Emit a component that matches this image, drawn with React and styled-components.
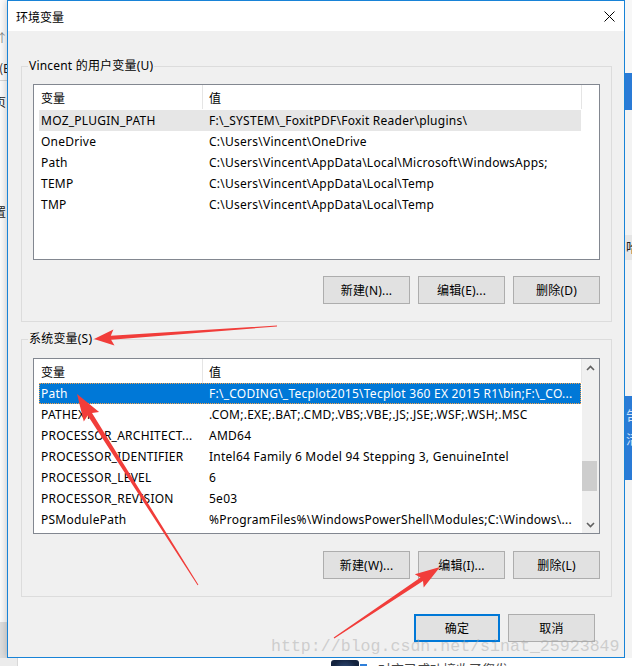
import React from "react";
import styled, { createGlobalStyle } from "styled-components";

const UI_FONT = `"Noto Sans", "Noto Sans CJK SC", sans-serif`;

const GlobalStyle = createGlobalStyle`
  html, body { margin: 0; padding: 0; }
  body {
    width: 632px;
    height: 666px;
    overflow: hidden;
    background: #f4f4f4;
    font-family: ${UI_FONT};
  }
  * { box-sizing: border-box; }
`;

const Page = styled.div`
  position: relative;
  width: 632px;
  height: 666px;
  overflow: hidden;
  display: grid;
  grid-template-columns: 7px 618px 7px;
  grid-template-rows: 658px 8px;
`;

/* ---------- background windows ---------- */
const LeftStrip = styled.div`
  background: #fbfbfb;
  overflow: hidden;
  display: flex;
  flex-direction: column;
  border-bottom: 36px solid #dedede;
`;

const StripGlyph = styled.div`
  margin-top: ${(p) => p.$mt}px;
  margin-left: ${(p) => p.$ml || -4}px;
  font-size: 12px;
  line-height: 12px;
  height: 12px;
  white-space: nowrap;
  color: ${(p) => p.$color || "#222"};
  font-family: "Noto Sans CJK SC", sans-serif;
`;

const StripRule = styled.div`
  margin-top: ${(p) => p.$mt}px;
  height: 1px;
  background: #d6d6d6;
`;

const RightStrip = styled.div`
  background: #f3f3f3;
  overflow: hidden;
  display: flex;
  flex-direction: column;
`;

const Band = styled.div`
  height: ${(p) => p.$h}px;
  flex: none;
  background: ${(p) => p.$bg};
  overflow: hidden;
  display: flex;
  flex-direction: column;
  gap: 10px;
  padding-top: ${(p) => p.$pt || 0}px;
`;

const BandGlyph = styled.div`
  margin-left: 1px;
  font-size: 13px;
  line-height: 14px;
  color: ${(p) => p.$color};
  font-family: "Noto Sans CJK SC", sans-serif;
  white-space: nowrap;
`;

const BottomStrip = styled.div`
  grid-column: 1 / 4;
  background: #ffffff;
  display: flex;
  overflow: hidden;
`;

const BottomGray = styled.div`
  width: 18px;
  flex: none;
  background: #ececec;
  border-right: 1px solid #d8d8d8;
`;

const Avatar = styled.div`
  margin-left: 313px;
  margin-top: 2px;
  width: 28px;
  height: 20px;
  flex: none;
  border-radius: 3px;
  background: radial-gradient(circle at 50% 60%, #3a5a8c 0, #14233f 70%);
  position: relative;
`;

const AvatarBadge = styled.div`
  position: absolute;
  right: -9px;
  top: 3px;
  width: 9px;
  height: 9px;
  background: #2f7fd9;
  border: 1px solid #fff;
`;

const BottomText = styled.div`
  margin-left: 19px;
  padding-top: 3px;
  font-size: 13px;
  line-height: 16px;
  color: #444;
  white-space: nowrap;
  font-family: "Noto Sans CJK SC", sans-serif;
`;

/* ---------- dialog ---------- */
const Dialog = styled.div`
  width: 618px;
  height: 658px;
  border: 1px solid #1883d7;
  background: #f0f0f0;
  display: flex;
  flex-direction: column;
  box-shadow: 0 0 8px rgba(0, 0, 0, 0.25);
`;

const TitleBar = styled.div`
  height: 30px;
  flex: none;
  background: #ffffff;
  display: flex;
  align-items: center;
  justify-content: space-between;
  padding-left: 8px;
`;

const Title = styled.div`
  font-size: 12px;
  color: #000;
  font-family: "Noto Sans CJK SC", sans-serif;
`;

const CloseButton = styled.div`
  width: 29px;
  height: 30px;
  display: flex;
  align-items: center;
  justify-content: center;
`;

const Body = styled.div`
  flex: 1;
  display: flex;
  flex-direction: column;
  padding: 0 12px 0 13px;
`;

const Group = styled.div`
  position: relative;
  margin-top: ${(p) => p.$mt}px;
  border: 1px solid #dcdcdc;
  padding: ${(p) => p.$pt}px 11px ${(p) => p.$pb}px 11px;
  display: flex;
  flex-direction: column;
`;

const Legend = styled.div`
  position: absolute;
  left: 6px;
  top: -9px;
  padding: 0 1px;
  background: #f0f0f0;
  font-size: 12px;
  line-height: 16px;
  letter-spacing: 0.2px;
  color: #000;
`;

const List = styled.div`
  height: 176px;
  border: 1px solid #828790;
  background: #ffffff;
  display: flex;
  overflow: hidden;
`;

const ListMain = styled.div`
  width: 548px;
  flex: none;
  display: flex;
  flex-direction: column;
`;

const Header = styled.div`
  height: 24px;
  flex: none;
  display: flex;
`;

const HeaderCell = styled.div`
  width: ${(p) => (p.$w ? `${p.$w}px` : "auto")};
  flex: ${(p) => (p.$w ? "none" : 1)};
  padding-left: ${(p) => p.$pl}px;
  border-right: 1px solid #e5e5e5;
  display: flex;
  align-items: center;
  font-size: 12px;
  color: #000;
  font-family: "Noto Sans CJK SC", sans-serif;
`;

const Rows = styled.div`
  padding-top: ${(p) => p.$pt}px;
  display: flex;
  flex-direction: column;
`;

const Row = styled.div`
  height: 21px;
  margin-left: 5px;
  width: 542px;
  display: grid;
  grid-template-columns: 163px 1fr;
  align-items: center;
  font-size: 12px;
  letter-spacing: 0.25px;
  white-space: nowrap;
  color: ${(p) => (p.$sel === "active" ? "#ffffff" : "#000000")};
  background: ${(p) =>
    p.$sel === "active" ? "#0078d7" : p.$sel === "inactive" ? "#e6e6e6" : "transparent"};
  outline: ${(p) => (p.$sel === "active" ? "1px dotted #f7a24a" : "none")};
  outline-offset: -1px;
`;

const Cell = styled.div`
  padding-left: ${(p) => p.$pl}px;
  overflow: hidden;
`;

const SideBlank = styled.div`
  flex: 1;
  background: #ffffff;
`;

const ScrollBar = styled.div`
  width: 17px;
  flex: none;
  margin-left: auto;
  background: #f0f0f0;
  display: flex;
  flex-direction: column;
`;

const ScrollArrow = styled.div`
  height: 17px;
  flex: none;
  display: flex;
  align-items: center;
  justify-content: center;
`;

const ScrollTrack = styled.div`
  flex: 1;
  display: flex;
  flex-direction: column;
  padding-top: ${(p) => p.$offset}px;
`;

const Thumb = styled.div`
  width: 15px;
  height: 30px;
  background: #cdcdcd;
`;

const ButtonRow = styled.div`
  margin-top: ${(p) => p.$mt}px;
  margin-right: ${(p) => p.$mr || 0}px;
  display: flex;
  justify-content: flex-end;
  gap: ${(p) => p.$gap}px;
`;

const Button = styled.div`
  width: ${(p) => p.$w}px;
  height: 28px;
  background: #e1e1e1;
  border: ${(p) => (p.$default ? "2px solid #0078d7" : "1px solid #adadad")};
  display: flex;
  align-items: center;
  justify-content: center;
  font-size: 12px;
  letter-spacing: 0.2px;
  color: #000;
  white-space: nowrap;
`;

/* ---------- overlays ---------- */
const Overlay = styled.svg`
  position: absolute;
  left: 0;
  top: 0;
  width: 632px;
  height: 666px;
  pointer-events: none;
`;

const Watermark = styled.div`
  position: absolute;
  left: 271px;
  top: 637px;
  font-family: "Liberation Mono", monospace;
  font-size: 16.6px;
  line-height: 20px;
  color: rgba(170, 170, 170, 0.5);
  white-space: nowrap;
  pointer-events: none;
`;

/* ---------- data ---------- */
const userVars = [
  ["MOZ_PLUGIN_PATH", String.raw`F:\_SYSTEM\_FoxitPDF\Foxit Reader\plugins\ `.trim()],
  ["OneDrive", String.raw`C:\Users\Vincent\OneDrive`],
  ["Path", String.raw`C:\Users\Vincent\AppData\Local\Microsoft\WindowsApps;`],
  ["TEMP", String.raw`C:\Users\Vincent\AppData\Local\Temp`],
  ["TMP", String.raw`C:\Users\Vincent\AppData\Local\Temp`],
];

const sysVars = [
  ["Path", String.raw`F:\_CODING\_Tecplot2015\Tecplot 360 EX 2015 R1\bin;F:\_CO...`],
  ["PATHEXT", ".COM;.EXE;.BAT;.CMD;.VBS;.VBE;.JS;.JSE;.WSF;.WSH;.MSC"],
  ["PROCESSOR_ARCHITECT...", "AMD64"],
  ["PROCESSOR_IDENTIFIER", "Intel64 Family 6 Model 94 Stepping 3, GenuineIntel"],
  ["PROCESSOR_LEVEL", "6"],
  ["PROCESSOR_REVISION", "5e03"],
  ["PSModulePath", String.raw`%ProgramFiles%\WindowsPowerShell\Modules;C:\Windows\...`],
];

function arrowPoints(tail, tip, { head = 20, half = 8, w0 = 1, w1 = 4, back = 3 }) {
  const dx = tip[0] - tail[0];
  const dy = tip[1] - tail[1];
  const len = Math.hypot(dx, dy);
  const ux = dx / len;
  const uy = dy / len;
  const nx = -uy;
  const ny = ux;
  const bx = tip[0] - ux * head;
  const by = tip[1] - uy * head;
  const pts = [
    [tail[0] + (nx * w0) / 2, tail[1] + (ny * w0) / 2],
    [bx + (nx * w1) / 2, by + (ny * w1) / 2],
    [bx - ux * back + nx * half, by - uy * back + ny * half],
    tip,
    [bx - ux * back - nx * half, by - uy * back - ny * half],
    [bx - (nx * w1) / 2, by - (ny * w1) / 2],
    [tail[0] - (nx * w0) / 2, tail[1] - (ny * w0) / 2],
  ];
  return pts.map((p) => `${p[0].toFixed(1)},${p[1].toFixed(1)}`).join(" ");
}

const Chevron = ({ up }) => (
  <svg width="9" height="6" viewBox="0 0 9 6">
    <path
      d={up ? "M1 5 L4.5 1.5 L8 5" : "M1 1 L4.5 4.5 L8 1"}
      fill="none"
      stroke="#606060"
      strokeWidth="1.6"
    />
  </svg>
);

function ListView({ rows, selected, active, rowsPt, scroll }) {
  return (
    <List>
      <ListMain>
        <Header>
          <HeaderCell $w={169} $pl={7}>变量</HeaderCell>
          <HeaderCell $pl={6}>值</HeaderCell>
        </Header>
        <Rows $pt={rowsPt}>
          {rows.map(([name, value], i) => (
            <Row key={name} $sel={i === selected ? (active ? "active" : "inactive") : ""}>
              <Cell $pl={2}>{name}</Cell>
              <Cell $pl={7}>{value}</Cell>
            </Row>
          ))}
        </Rows>
      </ListMain>
      {scroll ? (
        <ScrollBar>
          <ScrollArrow>
            <Chevron up />
          </ScrollArrow>
          <ScrollTrack $offset={85}>
            <Thumb />
          </ScrollTrack>
          <ScrollArrow>
            <Chevron />
          </ScrollArrow>
        </ScrollBar>
      ) : (
        <SideBlank />
      )}
    </List>
  );
}

export default function App() {
  return (
    <>
      <GlobalStyle />
      <Page>
        <LeftStrip>
          <StripGlyph $mt={32} $color="#888">↑</StripGlyph>
          <StripGlyph $mt={18} $ml={-1}>(E</StripGlyph>
          <StripRule $mt={6} />
          <StripGlyph $mt={15} $ml={-6}>页</StripGlyph>
          <StripGlyph $mt={98} $ml={-6}>置</StripGlyph>
        </LeftStrip>

        <Dialog>
          <TitleBar>
            <Title>环境变量</Title>
            <CloseButton>
              <svg width="11" height="11" viewBox="0 0 11 11">
                <path d="M0.5 0.5 L10.5 10.5 M10.5 0.5 L0.5 10.5" stroke="#000" strokeWidth="1" />
              </svg>
            </CloseButton>
          </TitleBar>

          <Body>
            <Group $mt={35} $pt={17} $pb={17}>
              <Legend>Vincent 的用户变量(U)</Legend>
              <ListView rows={userVars} selected={0} active={false} rowsPt={1} />
              <ButtonRow $mt={16} $gap={8}>
                <Button $w={87}>新建(N)...</Button>
                <Button $w={87}>编辑(E)...</Button>
                <Button $w={87}>删除(D)</Button>
              </ButtonRow>
            </Group>

            <Group $mt={17} $pt={18} $pb={17}>
              <Legend>系统变量(S)</Legend>
              <ListView rows={sysVars} selected={0} active rowsPt={0} scroll />
              <ButtonRow $mt={17} $gap={8}>
                <Button $w={87}>新建(W)...</Button>
                <Button $w={87}>编辑(I)...</Button>
                <Button $w={87}>删除(L)</Button>
              </ButtonRow>
            </Group>

            <ButtonRow $mt={17} $gap={8} $mr={17}>
              <Button $w={86} $default>确定</Button>
              <Button $w={87}>取消</Button>
            </ButtonRow>
          </Body>
        </Dialog>

        <RightStrip>
          <Band $h={73} $bg="#f7f7f7" />
          <Band $h={37} $bg="#2a7bd6" />
          <Band $h={125} $bg="#f3f3f3" />
          <Band $h={25} $bg="#e6e6e6" $pt={5}>
            <BandGlyph $color="#222">哈</BandGlyph>
          </Band>
          <Band $h={136} $bg="#f3f3f3" />
          <Band $h={84} $bg="#2a7bd6" $pt={12}>
            <BandGlyph $color="#cfe2f7">告</BandGlyph>
            <BandGlyph $color="#cfe2f7">活</BandGlyph>
          </Band>
          <Band $h={178} $bg="#f3f3f3" />
        </RightStrip>

        <BottomStrip>
          <BottomGray />
          <Avatar>
            <AvatarBadge />
          </Avatar>
          <BottomText>对方已成功接收了您发</BottomText>
        </BottomStrip>

        <Watermark>http://blog.csdn.net/sinat_25923849</Watermark>

        <Overlay viewBox="0 0 632 666">
          <polygon
            points={arrowPoints([277, 326], [94, 339], { head: 17, half: 8, w0: 1, w1: 4 })}
            fill="#f13d3a"
          />
          <polygon
            points={arrowPoints([198, 585], [77, 394], { head: 24, half: 9, w0: 1, w1: 5 })}
            fill="#f13d3a"
          />
          <polygon
            points={arrowPoints([334, 638], [440, 567], { head: 22, half: 8, w0: 1, w1: 4.5 })}
            fill="#f13d3a"
          />
        </Overlay>
      </Page>
    </>
  );
}
